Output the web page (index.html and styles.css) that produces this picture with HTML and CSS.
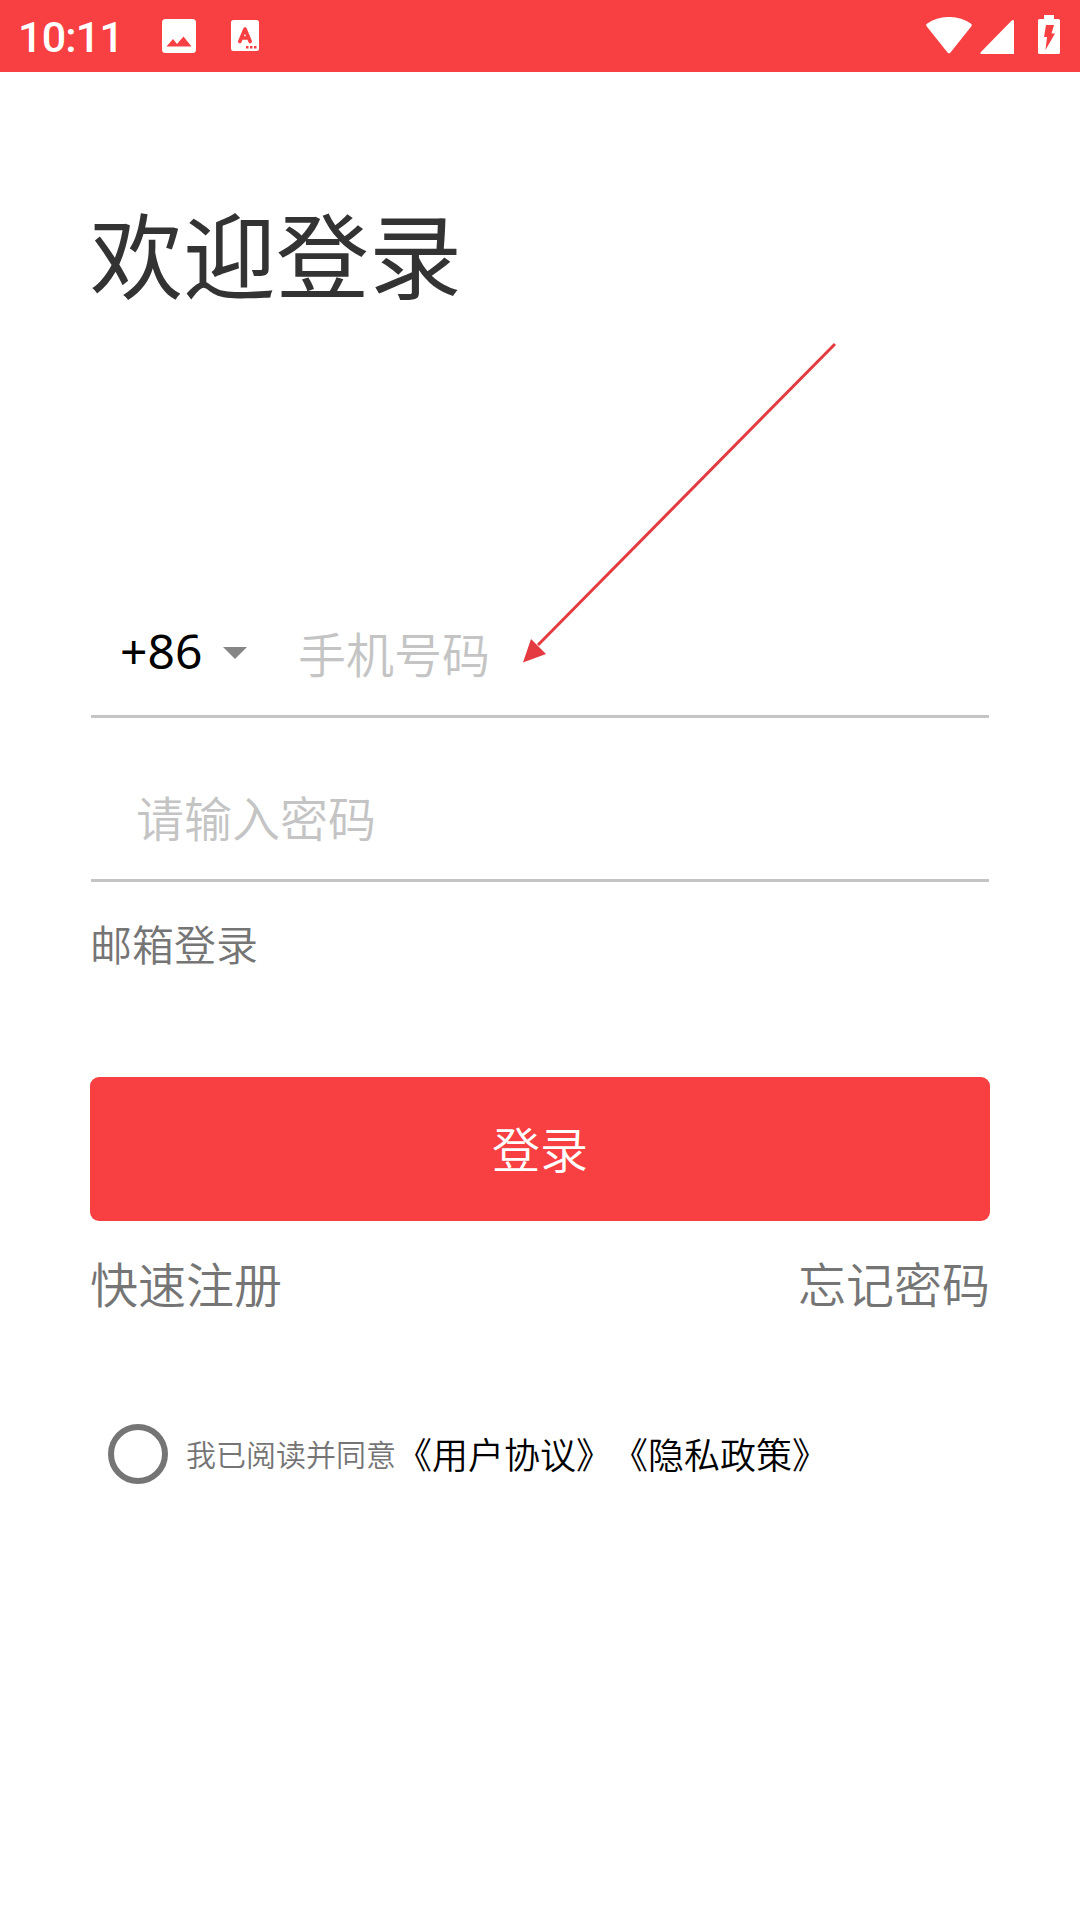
FILE: index.html
```html
<!DOCTYPE html>
<html lang="zh-CN">
<head>
  <meta charset="UTF-8">
  <meta name="viewport" content="width=device-width, initial-scale=1.0">
  <title>欢迎登录</title>
  <link rel="stylesheet" href="styles.css">
</head>
<body>
  <header class="status">
    <span class="status__time">10:11</span>
    <svg class="status__image" width="34" height="34" viewBox="0 0 34 34">
      <path fill="#fff" fill-rule="evenodd" d="M3.500 0h27A3.500 3.500 0 0 1 34 3.500v27a3.500 3.500 0 0 1-3.500 3.500h-27A3.500 3.500 0 0 1 0 30.500v-27A3.500 3.500 0 0 1 3.500 0zM4.500 27.500h25L21.500 17.500 15 25l-4-5z"/>
    </svg>
    <svg class="status__lang" width="28" height="31" viewBox="0 0 28 31">
      <rect width="28" height="31" rx="2.500" fill="#fff"/>
      <path d="M8.800 21.500L14 9l5.200 12.500M10.500 18h7" fill="none" stroke="#f84042" stroke-width="3.600" stroke-linecap="round" stroke-linejoin="round"/>
      <path d="M15 26h2.500v2.500H15zM19 26h2.500v2.500H19zM23 26h2.500v2.500H23z" fill="#f84042"/>
    </svg>
    <div class="status__right">
      <svg class="status__wifi" width="46" height="37" viewBox="0 0 46 37">
        <path fill="#fff" d="M.8 9.500C-.2 8.300 0 7.300 1.200 6.500 14-2.200 32-2.200 44.800 6.500c1.200.8 1.400 1.800.4 3L24.500 35.600c-.9 1.100-2.100 1.100-3 0z"/>
      </svg>
      <svg class="status__signal" width="34" height="34" viewBox="0 0 34 34">
        <path fill="#fff" d="M1.200 31.800L31.500.8C32.600-.4 34 0 34 1.500V34H1.500C0 34 0 33 1.200 31.800z"/>
      </svg>
      <svg class="status__battery" width="22" height="39" viewBox="0 0 22 39">
        <path fill="#fff" d="M6 0h10v4h4.500Q22 4 22 5.500v32q0 1.500-1.500 1.500h-19Q0 39 0 37.500v-32Q0 4 1.500 4H6z"/>
        <path fill="#f84042" d="M8 10h8l-2.500 8.500H17L7.500 35 9 22H6z"/>
      </svg>
    </div>
  </header>
  <main class="login">
    <h1 class="login__title">欢迎登录</h1>
    <form>
      <div class="field">
        <span class="field__code">+86</span>
        <span class="field__arrow"></span>
        <input class="field__input" type="tel" placeholder="手机号码">
      </div>
      <div class="field field--password">
        <input class="field__input" type="password" placeholder="请输入密码">
      </div>
      <a class="login__mail">邮箱登录</a>
      <button class="login__btn" type="button">登录</button>
      <div class="login__links">
        <a>快速注册</a>
        <a>忘记密码</a>
      </div>
      <div class="agree">
        <span class="agree__radio"></span>
        <span class="agree__text">我已阅读并同意</span>
        <a class="agree__link">《用户协议》</a>
        <a class="agree__link">《隐私政策》</a>
      </div>
    </form>
  </main>
  <svg class="pointer" width="320" height="330" viewBox="0 0 320 330">
    <path d="M313 4L16 305" stroke="#e33b3f" stroke-width="3"/>
    <path d="M1 322.500L9 299l15 15z" fill="#e33b3f"/>
  </svg>
</body>
</html>
```
FILE: styles.css
```css
* {
  margin: 0;
  padding: 0;
  box-sizing: border-box;
}

body {
  position: relative;
  height: 1920px;
  background: #fff;
  font-family: "Noto Sans CJK SC", sans-serif;
  font-size: 48px;
  font-weight: 350;
  overflow: hidden;
}

svg {
  display: block;
}

/* status bar */
.status {
  display: flex;
  height: 72px;
  padding: 0 20px 0 18px;
  background: #f84042;
}

.status__time {
  width: 144px;
  color: #fff;
  font: 500 43px/75px Roboto, sans-serif;
  letter-spacing: -0.8px;
}

.status__image {
  margin-top: 19px;
}

.status__lang {
  margin: 20px 0 0 35px;
}

.status__right {
  display: flex;
  margin-left: auto;
}

.status__wifi {
  margin: 17px 8px 0 0;
}

.status__signal {
  margin: 20px 24px 0 0;
}

.status__battery {
  margin-top: 15px;
}

/* login form */
.login {
  padding: 110px 90px 0;
}

.login__title {
  height: 144px;
  color: #333;
  font-size: 93px;
  font-weight: 400;
  line-height: 140px;
}

.login form {
  padding-top: 264px;
}

.field {
  display: flex;
  align-items: center;
  height: 128px;
  margin: 0 1px;
  padding-left: 29px;
  border-bottom: 3px solid #c4c4c4;
}

.field--password {
  margin-top: 36px;
  padding-left: 45px;
}

.field__code {
  width: 103px;
  padding-bottom: 4px;
  color: #000;
  font-family: "Noto Sans", sans-serif;
  font-weight: 400;
  line-height: 70px;
}

.field__arrow {
  width: 24px;
  border: 12px solid transparent;
  border-top-color: #868686;
  border-bottom: 0;
}

.field__input {
  flex: 1;
  min-width: 0;
  height: 72px;
  padding-bottom: 2px;
  border: 0;
  outline: 0;
  background: none;
  font: inherit;
}

.field__arrow + .field__input {
  margin-left: 51px;
}

.field__input::placeholder {
  color: #c4c4c4;
}

.login__mail {
  display: block;
  margin-top: 30px;
  color: #757575;
  font-size: 42px;
  line-height: 62px;
}

.login__btn {
  display: block;
  width: 100%;
  height: 144px;
  margin-top: 103px;
  padding-bottom: 4px;
  border: 0;
  border-radius: 9px;
  background: #f84042;
  color: #fff;
  font: inherit;
}

.login__links {
  display: flex;
  justify-content: space-between;
  margin-top: 26px;
  color: #757575;
  line-height: 70px;
}

.agree {
  display: flex;
  align-items: center;
  height: 60px;
  margin-top: 107px;
  padding-left: 18px;
}

.agree__radio {
  width: 60px;
  height: 60px;
  margin-right: 18px;
  border: 6px solid #757575;
  border-radius: 50%;
}

.agree__text {
  padding-bottom: 2px;
  color: #757575;
  font-size: 30px;
}

.agree__link {
  padding-bottom: 2px;
  color: #000;
  font-size: 36px;
  text-spacing-trim: space-all;
}

/* red arrow towards the phone field */
.pointer {
  position: absolute;
  top: 340px;
  left: 522px;
}
```
